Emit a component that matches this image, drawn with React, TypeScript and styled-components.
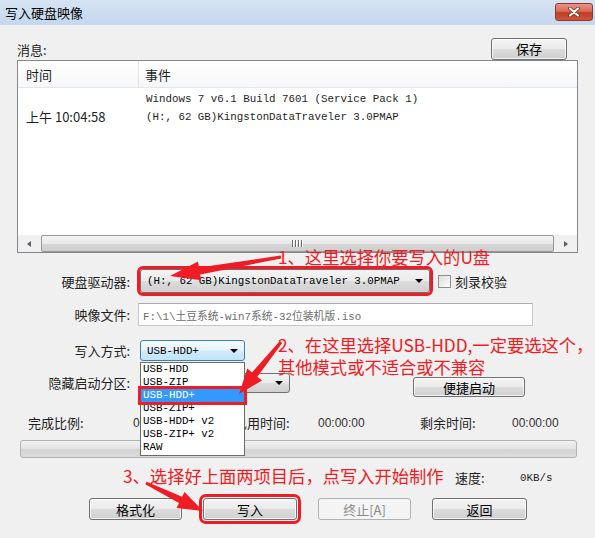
import React from 'react';
import styled, { createGlobalStyle } from 'styled-components';

const UI = `"Noto Sans CJK SC", "Noto Sans", sans-serif`;
const MONO = `"Liberation Mono", "Noto Sans CJK SC", monospace`;
const RED = '#ee1c25';

const GlobalStyle = createGlobalStyle`
  html, body { margin: 0; padding: 0; background: #f0f0f0; }
  body { font-family: ${UI}; font-size: 13px; color: #1e1e1e; }
`;

// --- window frame ---

const Window = styled.div`
  position: relative;
  width: 595px;
  height: 538px;
  background: #f0f0f0;
  overflow: hidden;
  display: flex;
  flex-direction: column;
`;

const TitleBar = styled.div`
  flex: none;
  height: 25px;
  display: flex;
  align-items: center;
  padding-left: 5px;
  background: linear-gradient(#d5e3f3, #c4d7ed);
  font-size: 13px;
  color: #000;
`;

const CloseButton = styled.div`
  margin-left: auto;
  margin-right: 2px;
  align-self: flex-start;
  margin-top: 3px;
  width: 36px;
  height: 16px;
  border: 1px solid #8d3a2c;
  border-radius: 3px;
  background: linear-gradient(#e89584 0%, #d86a54 45%, #c23d27 55%, #cf553b 100%);
  display: flex;
  align-items: center;
  justify-content: center;
`;

const Client = styled.div`
  flex: 1;
  display: flex;
  flex-direction: column;
  padding: 0 17px;
`;

// --- generic controls ---

const WinButton = styled.button<{ $w: number; $marked?: boolean }>`
  width: ${(p) => p.$w}px;
  height: 22px;
  padding: 0;
  flex: none;
  border: 1px solid #707070;
  border-radius: 3px;
  background: linear-gradient(#f3f3f3 0%, #ebebeb 48%, #dcdcdc 52%, #cfcfcf 100%);
  box-shadow: inset 0 0 0 1px rgba(255, 255, 255, 0.75);
  font: 13px ${UI};
  color: #000;
  outline: ${(p) => (p.$marked ? `3px solid ${RED}` : 'none')};
  outline-offset: 1px;

  &:disabled {
    border-color: #adb2b5;
    background: #f4f4f4;
    box-shadow: none;
    color: #8a8a8a;
  }
`;

const Combo = styled.div<{ $w: number; $h?: number; $focus?: boolean; $marked?: boolean }>`
  position: relative;
  flex: none;
  width: ${(p) => p.$w}px;
  height: ${(p) => p.$h ?? 21}px;
  box-sizing: border-box;
  display: flex;
  align-items: center;
  padding: 0 6px 0 6px;
  border: 1px solid ${(p) => (p.$focus ? '#3c7fb1' : '#707070')};
  border-radius: 3px;
  background: ${(p) =>
    p.$focus
      ? 'linear-gradient(#f4fafe 0%, #e6f4fc 48%, #d1ebfa 52%, #c2e3f7 100%)'
      : 'linear-gradient(#f3f3f3 0%, #ebebeb 48%, #dcdcdc 52%, #cfcfcf 100%)'};
  font: 10.8px ${MONO};
  color: #000;
  outline: ${(p) => (p.$marked ? `3px solid ${RED}` : 'none')};
  outline-offset: 0;
`;

const ComboText = styled.span`
  flex: 1;
  white-space: nowrap;
  overflow: hidden;
`;

const Caret = styled.span`
  width: 0;
  height: 0;
  border-left: 4px solid transparent;
  border-right: 4px solid transparent;
  border-top: 4px solid #000;
  margin-left: 4px;
`;

const TextInput = styled.div<{ $w: number }>`
  width: ${(p) => p.$w}px;
  height: 23px;
  box-sizing: border-box;
  border: 1px solid #c5c8cd;
  border-top-color: #abadb3;
  background: #fff;
  display: flex;
  align-items: center;
  padding-left: 4px;
  font: 10.8px ${MONO};
  color: #6d6d6d;
  white-space: nowrap;
`;

const Check = styled.span`
  width: 13px;
  height: 13px;
  box-sizing: border-box;
  border: 1px solid #8e8f8f;
  background: linear-gradient(135deg, #dcdcdc, #fdfdfd);
  margin: 0 4px 0 8px;
`;

// --- message list ---

const TopRow = styled.div`
  margin-top: 13px;
  height: 21px;
  display: flex;
  align-items: center;
  justify-content: space-between;
`;

const ListBox = styled.div`
  margin-top: 1px;
  height: 193px;
  box-sizing: border-box;
  border: 1px solid #828790;
  background: #fff;
  display: flex;
  flex-direction: column;
`;

const ListHeader = styled.div`
  height: 26px;
  display: grid;
  grid-template-columns: 121px 1fr;
  border-bottom: 1px solid #e5e5e5;
  background: linear-gradient(#ffffff, #f6f7f9);
`;

const HeaderCell = styled.div<{ $pad: number; $divider?: boolean }>`
  display: flex;
  align-items: center;
  padding-left: ${(p) => p.$pad}px;
  border-right: ${(p) => (p.$divider ? '1px solid #e5e5e5' : 'none')};
  font-size: 13px;
  color: #1e1e1e;
`;

const ListBody = styled.div`
  flex: 1;
  padding-top: 2px;
`;

const ListRow = styled.div`
  height: 17px;
  display: grid;
  grid-template-columns: 121px 1fr;
  align-items: center;
`;

const TimeCell = styled.div`
  padding-left: 8px;
  font-size: 13px;
  color: #1e1e1e;
  white-space: nowrap;
`;

const EventCell = styled.div`
  padding-left: 7px;
  font: 10.8px ${MONO};
  color: #1e1e1e;
  white-space: nowrap;
`;

const ScrollBar = styled.div`
  height: 17px;
  display: flex;
  background: #f0f0f0;
`;

const ScrollArrow = styled.div`
  width: 22px;
  display: flex;
  align-items: center;
  justify-content: center;
`;

const ArrowGlyph = styled.span<{ $dir: 'left' | 'right' }>`
  width: 0;
  height: 0;
  border-top: 3.5px solid transparent;
  border-bottom: 3.5px solid transparent;
  ${(p) => (p.$dir === 'left' ? 'border-right: 4px solid #606060;' : 'border-left: 4px solid #606060;')}
`;

const Thumb = styled.div`
  flex: 1;
  margin: 0 1px;
  border: 1px solid #979797;
  border-radius: 2px;
  background: linear-gradient(#f4f4f4 0%, #e8e8e8 50%, #d6d6d6 51%, #cfcfcf 100%);
  display: flex;
  align-items: center;
  justify-content: center;
  gap: 1px;
`;

const Grip = styled.span`
  width: 1px;
  height: 7px;
  background: #6f6f6f;
  box-shadow: 1px 0 0 #fff;
  margin-right: 1px;
`;

// --- form rows ---

const FormRow = styled.div<{ $top: number; $h: number }>`
  margin-top: ${(p) => p.$top}px;
  height: ${(p) => p.$h}px;
  display: flex;
  align-items: center;
`;

const Label = styled.span<{ $gap: number }>`
  width: 113px;
  flex: none;
  text-align: right;
  margin-right: ${(p) => p.$gap}px;
  font-size: 13px;
  white-space: nowrap;
`;

const Anchor = styled.div`
  position: relative;
  flex: none;
`;

const DropList = styled.div`
  position: absolute;
  top: 100%;
  left: 0;
  width: 105px;
  box-sizing: border-box;
  margin-top: 1px;
  padding-bottom: 1px;
  border: 1px solid #6a6a6a;
  background: #fff;
  z-index: 5;
`;

const DropItem = styled.div<{ $active?: boolean }>`
  height: 13px;
  line-height: 13px;
  padding-left: 2px;
  font: 10.8px ${MONO};
  color: ${(p) => (p.$active ? '#fff' : '#000')};
  background: ${(p) => (p.$active ? '#3399ff' : 'transparent')};
  outline: ${(p) => (p.$active ? `3px solid ${RED}` : 'none')};
  outline-offset: 0;
  position: relative;
  z-index: ${(p) => (p.$active ? 1 : 0)};
`;

const StatRow = styled.div`
  margin-top: 16px;
  height: 18px;
  padding-left: 11px;
  display: grid;
  grid-template-columns: 105px 101px 84px 102px 92px auto;
  align-items: center;
  font-size: 13px;
  white-space: nowrap;
`;

const Num = styled.span`
  font: 12px "Liberation Sans", sans-serif;
  color: #333;
`;

const Progress = styled.div`
  margin: 9px 1px 0 3px;
  height: 18px;
  box-sizing: border-box;
  border: 1px solid #b2b2b2;
  border-radius: 3px;
  background: linear-gradient(#f2f2f2 0%, #e2e2e2 50%, #d3d3d3 51%, #dcdcdc 100%);
`;

const SpeedRow = styled.div`
  margin-top: 10px;
  height: 16px;
  margin-left: 438px;
  display: grid;
  grid-template-columns: 65px auto;
  align-items: center;
  font-size: 13px;
`;

const MonoValue = styled.span`
  font: 10.8px ${MONO};
  color: #1e1e1e;
`;

const ButtonRow = styled.div`
  margin-top: 14px;
  height: 22px;
  padding-left: 72px;
  display: flex;
  gap: 21px;
`;

// --- red annotations (overlay) ---

const Note = styled.div<{ $x: number; $y: number }>`
  position: absolute;
  left: ${(p) => p.$x}px;
  top: ${(p) => p.$y}px;
  z-index: 10;
  font: 17.3px/22px ${UI};
  color: ${RED};
  white-space: nowrap;
`;

const Overlay = styled.svg`
  position: absolute;
  inset: 0;
  z-index: 11;
  pointer-events: none;
`;

function arrow(x1: number, y1: number, x2: number, y2: number, hl: number, hw: number, tw: number, nw: number) {
  const len = Math.hypot(x2 - x1, y2 - y1);
  const ux = (x2 - x1) / len;
  const uy = (y2 - y1) / len;
  const nx = -uy;
  const ny = ux;
  const bx = x2 - ux * hl;
  const by = y2 - uy * hl;
  const pts = [
    [x1 + (nx * tw) / 2, y1 + (ny * tw) / 2],
    [bx + (nx * nw) / 2, by + (ny * nw) / 2],
    [bx + (nx * hw) / 2, by + (ny * hw) / 2],
    [x2, y2],
    [bx - (nx * hw) / 2, by - (ny * hw) / 2],
    [bx - (nx * nw) / 2, by - (ny * nw) / 2],
    [x1 - (nx * tw) / 2, y1 - (ny * tw) / 2],
  ];
  return pts.map((p) => p.map((v) => v.toFixed(1)).join(',')).join(' ');
}

const modes = ['USB-HDD', 'USB-ZIP', 'USB-HDD+', 'USB-ZIP+', 'USB-HDD+ v2', 'USB-ZIP+ v2', 'RAW'];

export default function App() {
  return (
    <>
      <GlobalStyle />
      <Window>
        <TitleBar>
          写入硬盘映像
          <CloseButton>
            <svg width="14" height="10" viewBox="0 0 14 10">
              <path d="M3 1.5 L11 8.5 M11 1.5 L3 8.5" stroke="#6b2418" strokeWidth="3.6" strokeLinecap="round" />
              <path d="M3 1.5 L11 8.5 M11 1.5 L3 8.5" stroke="#fff" strokeWidth="2.2" strokeLinecap="round" />
            </svg>
          </CloseButton>
        </TitleBar>

        <Client>
          <TopRow>
            <span style={{ paddingTop: 2 }}>消息:</span>
            <WinButton $w={76} style={{ marginRight: 11 }}>保存</WinButton>
          </TopRow>

          <ListBox>
            <ListHeader>
              <HeaderCell $pad={8} $divider>时间</HeaderCell>
              <HeaderCell $pad={6}>事件</HeaderCell>
            </ListHeader>
            <ListBody>
              <ListRow>
                <TimeCell />
                <EventCell>Windows 7 v6.1 Build 7601 (Service Pack 1)</EventCell>
              </ListRow>
              <ListRow>
                <TimeCell>上午 10:04:58</TimeCell>
                <EventCell>(H:, 62 GB)KingstonDataTraveler 3.0PMAP</EventCell>
              </ListRow>
            </ListBody>
            <ScrollBar>
              <ScrollArrow><ArrowGlyph $dir="left" /></ScrollArrow>
              <Thumb>
                <Grip /><Grip /><Grip /><Grip />
              </Thumb>
              <ScrollArrow><ArrowGlyph $dir="right" /></ScrollArrow>
            </ScrollBar>
          </ListBox>

          <FormRow $top={16} $h={24}>
            <Label $gap={10}>硬盘驱动器:</Label>
            <Combo $w={290} $h={24} $marked>
              <ComboText>(H:, 62 GB)KingstonDataTraveler 3.0PMAP</ComboText>
              <Caret />
            </Combo>
            <Check />
            <span>刻录校验</span>
          </FormRow>

          <FormRow $top={10} $h={23}>
            <Label $gap={8}>映像文件:</Label>
            <TextInput $w={395}>F:\1\土豆系统-win7系统-32位装机版.iso</TextInput>
          </FormRow>

          <FormRow $top={14} $h={21}>
            <Label $gap={10}>写入方式:</Label>
            <Anchor>
              <Combo $w={105} $focus>
                <ComboText>USB-HDD+</ComboText>
                <Caret />
              </Combo>
              <DropList>
                {modes.map((m) => (
                  <DropItem key={m} $active={m === 'USB-HDD+'}>{m}</DropItem>
                ))}
              </DropList>
            </Anchor>
          </FormRow>

          <FormRow $top={12} $h={24} style={{ alignItems: 'flex-start' }}>
            <Label $gap={10} style={{ lineHeight: '20px' }}>隐藏启动分区:</Label>
            <Combo $w={150} $h={20}>
              <ComboText />
              <Caret />
            </Combo>
            <WinButton $w={112} style={{ marginLeft: 123, marginTop: 4, height: 20 }}>便捷启动</WinButton>
          </FormRow>

          <StatRow>
            <span>完成比例:</span>
            <Num>0%</Num>
            <span>已用时间:</span>
            <Num>00:00:00</Num>
            <span>剩余时间:</span>
            <Num>00:00:00</Num>
          </StatRow>

          <Progress />

          <SpeedRow>
            <span>速度:</span>
            <MonoValue>0KB/s</MonoValue>
          </SpeedRow>

          <ButtonRow>
            <WinButton $w={93}>格式化</WinButton>
            <WinButton $w={94} $marked>写入</WinButton>
            <WinButton $w={93} disabled>终止[A]</WinButton>
            <WinButton $w={95}>返回</WinButton>
          </ButtonRow>
        </Client>

        <Note $x={278} $y={246}>1、这里选择你要写入的U盘</Note>
        <Note $x={278} $y={334}>
          2、在这里选择USB-HDD,一定要选这个，
          <br />
          其他模式或不适合或不兼容
        </Note>
        <Note $x={123} $y={465}>3、选择好上面两项目后，点写入开始制作</Note>

        <Overlay width="595" height="538" viewBox="0 0 595 538">
          <polygon points={arrow(281, 257, 170, 276, 30, 19, 3, 7)} fill={RED} />
          <polygon points={arrow(281, 342, 239, 394, 25, 19, 3, 7)} fill={RED} />
          <polygon points={arrow(146, 483, 203, 511, 25, 18, 3, 7)} fill={RED} />
        </Overlay>
      </Window>
    </>
  );
}
